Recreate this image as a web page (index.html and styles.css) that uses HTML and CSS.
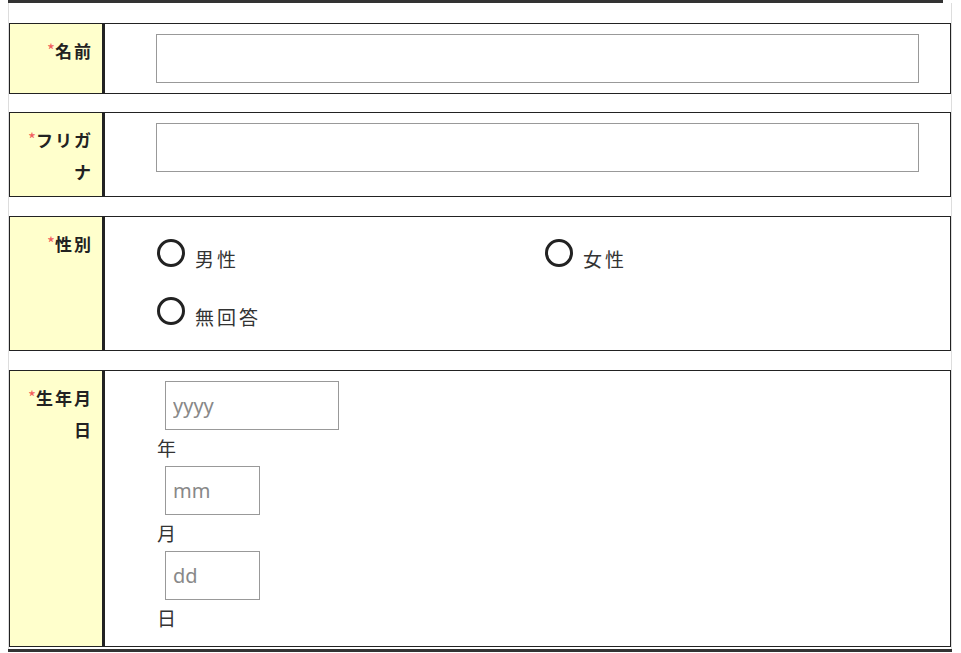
FILE: index.html
```html
<!DOCTYPE html>
<html lang="ja">
<head>
<meta charset="utf-8">
<title>フォーム</title>
<link rel="stylesheet" href="styles.css">
</head>
<body>
<div class="topbar"></div>
<div class="wrap">
  <div class="row">
    <div class="label"><span class="req">*</span>名前</div>
    <div class="value"><input class="text" type="text"></div>
  </div>
  <div class="row">
    <div class="label"><span class="req">*</span>フリガナ</div>
    <div class="value"><input class="text" type="text"></div>
  </div>
  <div class="row">
    <div class="label"><span class="req">*</span>性別</div>
    <div class="value">
      <div class="radios">
        <label class="radio"><span class="circle"></span><span class="rtext">男性</span></label>
        <label class="radio"><span class="circle"></span><span class="rtext">女性</span></label>
        <label class="radio"><span class="circle"></span><span class="rtext">無回答</span></label>
      </div>
    </div>
  </div>
  <div class="row">
    <div class="label"><span class="req">*</span>生年月日</div>
    <div class="value date">
      <input class="num yyyy" type="text" placeholder="yyyy">
      <div class="unit">年</div>
      <input class="num short" type="text" placeholder="mm">
      <div class="unit">月</div>
      <input class="num short" type="text" placeholder="dd">
      <div class="unit">日</div>
    </div>
  </div>
</div>
<div class="bottombar"></div>
</body>
</html>
```

FILE: styles.css
```css
html, body {
  margin: 0;
  padding: 0;
  background: #fff;
}
body {
  padding: 0 8px;
  font-family: "Noto Sans", "Noto Sans CJK JP", sans-serif;
  color: #333;
}
.topbar {
  width: 935px;
  height: 3px;
  background: #333;
}
.wrap {
  width: 942px;
  border-left: 1px solid #ddd;
  border-right: 1px solid #ddd;
  padding: 20px 0 2px;
}
.row {
  display: flex;
  border: 1px solid #222;
  margin-bottom: 18px;
}
.row:nth-child(2),
.row:nth-child(3) {
  margin-bottom: 19px;
}
.row:last-child {
  margin-bottom: 0;
}
.label {
  width: 74px;
  flex: none;
  background: #ffffcc;
  border-right: 3px solid #222;
  padding: 10px 9px 8px 9px;
  text-align: right;
  font-family: "Noto Sans CJK JP", sans-serif;
  font-weight: bold;
  font-size: 17px;
  line-height: 32px;
  letter-spacing: 2px;
  color: #222;
}
.req {
  color: #f25c5c;
  font-size: 17px;
  letter-spacing: 0;
  font-weight: normal;
  vertical-align: 1px;
}
.value {
  flex: 1;
  padding: 10px 31px 10px 51px;
}
.text {
  display: block;
  box-sizing: border-box;
  width: 100%;
  height: 49px;
  margin: 0;
  border: 1px solid #999;
  padding: 0 8px;
  font-size: 19px;
  outline: none;
}
.radios {
  display: grid;
  grid-template-columns: 388px 1fr;
  row-gap: 25px;
  padding: 12px 0 10px;
  margin-left: 1px;
}
.radio {
  display: flex;
  align-items: flex-start;
}
.circle {
  box-sizing: border-box;
  width: 28px;
  height: 28px;
  border: 3px solid #222;
  border-radius: 50%;
  flex: none;
}
.rtext {
  margin-left: 10px;
  margin-top: 7px;
  font-family: "Noto Sans CJK JP", sans-serif;
  font-size: 19px;
  line-height: 26px;
  letter-spacing: 3px;
  color: #333;
}
.date {
  display: flex;
  flex-direction: column;
  align-items: flex-start;
}
.num {
  box-sizing: border-box;
  height: 49px;
  margin: 0 0 0 9px;
  border: 1px solid #999;
  padding: 0 7px;
  font-family: "Noto Sans", sans-serif;
  font-size: 20px;
  color: #333;
  outline: none;
}
.num::placeholder {
  color: #888;
}
.yyyy {
  width: 174px;
}
.short {
  width: 95px;
}
.unit {
  line-height: 36px;
  font-family: "Noto Sans CJK JP", sans-serif;
  font-size: 19px;
  color: #333;
  margin-left: 1px;
}
.bottombar {
  width: 944px;
  height: 3px;
  background: #333;
}
```
